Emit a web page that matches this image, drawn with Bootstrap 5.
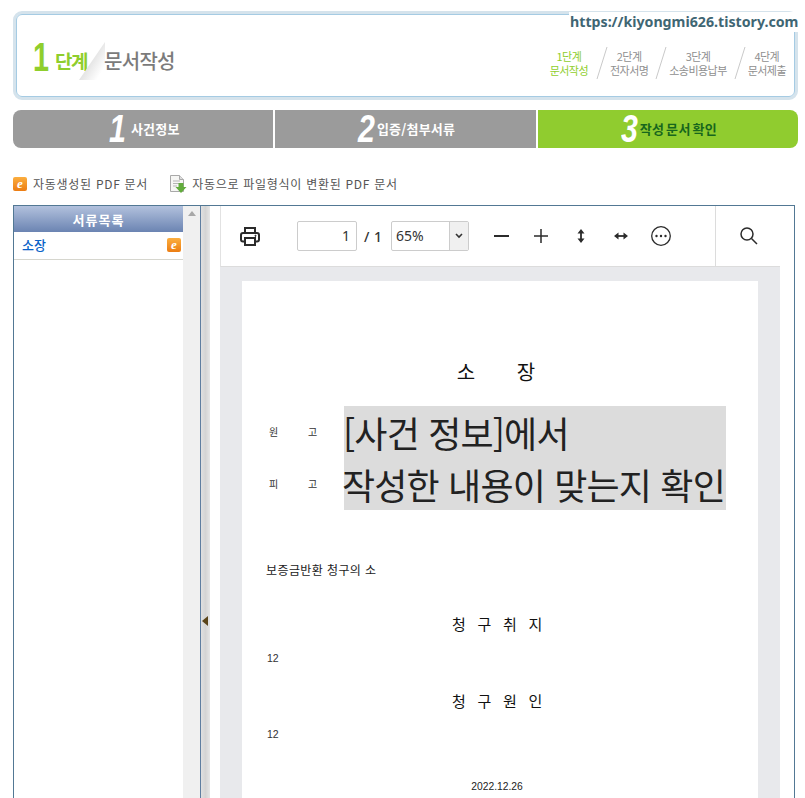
<!DOCTYPE html>
<html lang="ko">
<head>
<meta charset="utf-8">
<title>문서작성</title>
<link href="https://cdn.jsdelivr.net/npm/bootstrap@5.3.0/dist/css/bootstrap.min.css" rel="stylesheet">
<style>
html,body{height:798px;overflow:hidden;background:#fff;}
body{font-family:"Noto Sans CJK KR","Liberation Sans",sans-serif;color:#333;}
.shell{padding:11px 7px 0 13px;}
/* header */
.stage-band{height:89px;border:3px solid #d5e3ec;border-radius:9px;position:relative;}
.stage-box{height:83px;border:1px solid #a5cbe3;border-radius:6px;background:#fff;padding:0 8px 0 16px;}
.url-tag{position:absolute;top:-2px;left:553px;width:232px;height:20px;padding-left:1px;background:#fff;color:#3f6673;font:700 14.2px/20px "Noto Sans",sans-serif;white-space:nowrap;}
.big-one{font:700 40px/1 "Liberation Sans",sans-serif;color:#8fce2d;transform:scaleX(.72);transform-origin:left;width:22px;margin-top:2px;}
.stage-word{font-size:19px;font-weight:700;color:#8fce2d;letter-spacing:-1.5px;line-height:1;width:35px;margin-top:10px;}
.stage-fold{width:30px;height:40px;margin:10px -4px 0 -12px;flex:none;}
.stage-name{font-size:20px;font-weight:500;color:#7b7b7b;letter-spacing:-.7px;line-height:1;margin-top:10px;}
.step-wrap{margin-top:15px;}
.step-item{font-size:11px;line-height:14.5px;text-align:center;color:#8f8f8f;letter-spacing:-.55px;white-space:nowrap;}
.step-on{color:#8fce2d;}
.step-cut{width:12px;height:32px;margin:0 2px 0 7px;flex:none;}
.step-cut-first{margin-left:8px;}
/* tabs */
.tab-row{margin-top:10px;height:38px;gap:2px;}
.tab-cell{flex:1 1 0;background:#9b9b9b;color:#fff;font-size:13px;font-weight:700;height:38px;letter-spacing:.2px;}
.tab-first{border-radius:8px 0 0 8px;}
.tab-last{border-radius:0 8px 8px 0;background:#90cc2f;color:#17661d;word-spacing:-2px;letter-spacing:.3px;}
.tab-num{font:italic 700 38px/38px "Liberation Sans",sans-serif;color:#fff;margin-right:3px;letter-spacing:0;transform:scaleX(.8);display:inline-block;}
.tab-num-tight{margin-right:0;}
/* legend */
.legend-row{margin-top:26px;height:20px;font-size:12px;color:#555;letter-spacing:.72px;gap:21px;}
.orange-e{width:14px;height:14px;border-radius:2px;background:linear-gradient(#fbae3f,#ec7d13);color:#fff;font:italic 700 13px/14px "Liberation Serif",serif;text-align:center;flex:none;display:inline-block;letter-spacing:0;}
.legend-a{gap:6px;}
.legend-b{gap:5px;}
/* frame */
.main-frame{margin-top:11px;margin-right:3px;height:593px;border:1px solid #527894;border-bottom:0;background:#fff;overflow:hidden;}
.side-col{width:169px;flex:none;}
.side-head{height:26px;background:linear-gradient(#b2c1dd,#6b84b2);color:#fff;font-size:13px;font-weight:700;text-align:center;line-height:27px;letter-spacing:1.1px;}
.side-item{height:28px;border-bottom:1px solid #d6d6ce;padding:0 2px 2px 8px;color:#0a62c8;font-size:13px;font-weight:500;}
.side-scroll{width:17px;flex:none;background:#f0f0f0;padding-top:5px;text-align:center;}
.up-tri{display:block;width:0;height:0;margin:0 auto;border:4px solid transparent;border-top:0;border-bottom:5px solid #a8a8a8;}
.split-bar{width:10px;flex:none;border-left:1px solid #5f7ea0;background:linear-gradient(90deg,#e0e0e0,#d4d4d4 50%,#e6e6e6);height:100%;position:relative;}
.left-tri{position:absolute;left:1px;top:410px;width:0;height:0;border:5px solid transparent;border-left:0;border-right:6px solid #5a4418;}
.view-col{width:560px;flex:none;margin-left:10px;}
.view-tools{height:61px;border-left:1px solid #e2e2e2;border-bottom:1px solid #dcdcdc;background:#fff;color:#333;font-family:"Noto Sans",sans-serif;}
.tool-print{margin-left:19px;width:20px;}
.page-input{width:60px;height:30px;margin-left:37px;border:1px solid #ccc;border-radius:2px;text-align:right;padding-right:6px;font-size:14px;line-height:28px;}
.page-total{margin:0 11px 0 7px;font-size:14px;font-weight:500;letter-spacing:.5px;white-space:nowrap;width:16px;}
.zoom-box{width:78px;height:30px;border:1px solid #ccc;border-radius:2px;font-size:14px;line-height:28px;padding-left:4px;}
.zoom-caret{width:19px;height:28px;background:#f0f0f0;border-left:1px solid #ccc;}
.tool-gap{width:40px;flex:none;height:20px;}
.tool-minus{width:39px;margin-left:8px;margin-right:5px;}
.tool-sep{margin-left:34px;width:1px;height:60px;background:#dcdcdc;}
.view-desk{background:#e8e9ec;height:532px;padding:14px 22px 0;}
.doc-page{background:#fff;height:518px;padding:0 32px 0 24px;color:#222;}
.doc-title{padding-top:77px;height:125px;font-size:20px;line-height:28px;text-align:center;word-spacing:36px;color:#111;}
.party-wrap{height:104px;}
.party-col{width:78px;flex:none;font-size:10px;color:#333;padding-left:3px;}
.party-line{height:52px;line-height:52px;}
.party-line span{display:inline-block;width:39px;}
.note-box{width:382px;background:#dcdcdc;font-size:36px;line-height:52px;color:#222;white-space:nowrap;letter-spacing:-.83px;margin-right:-24px;flex:none;}
.note-top{margin-left:-1px;}
.note-low{margin-left:-2px;}
.case-name{margin-top:51px;font-size:12px;line-height:18px;color:#222;letter-spacing:.4px;}
.sec-head{font-size:15px;line-height:22px;text-align:center;letter-spacing:11.7px;color:#111;padding-left:14px;}
.sec-a{margin-top:34px;}
.sec-b{margin-top:25px;}
.doc-num{font:10.5px/14px "Liberation Sans",sans-serif;color:#333;margin-top:16px;padding-left:1px;}
.doc-num-b{margin-top:15px;}
.doc-date{font:10.3px/14px "Liberation Sans",sans-serif;color:#222;text-align:center;margin-top:39px;padding-left:2px;}
</style>
</head>
<body>
<div class="shell">
  <div class="stage-band">
    <div class="stage-box d-flex align-items-center">
      <div class="big-one">1</div>
      <div class="stage-word">단계</div>
      <svg class="stage-fold" viewBox="0 0 30 40"><defs><linearGradient id="fd" x1=".45" y1=".35" x2=".9" y2=".75"><stop offset="0" stop-color="#dedede"/><stop offset="1" stop-color="#fff"/></linearGradient></defs><polygon points="27,1 1,39 27,39" fill="url(#fd)"/></svg>
      <div class="stage-name">문서작성</div>
      <div class="ms-auto d-flex align-items-center step-wrap">
        <div class="step-item step-on"><div>1단계</div><div>문서작성</div></div>
        <svg class="step-cut step-cut-first" viewBox="0 0 12 32"><line x1="11" y1="0" x2="1" y2="32" stroke="#c9c9c9"/></svg>
        <div class="step-item"><div>2단계</div><div>전자서명</div></div>
        <svg class="step-cut" viewBox="0 0 12 32"><line x1="11" y1="0" x2="1" y2="32" stroke="#c9c9c9"/></svg>
        <div class="step-item"><div>3단계</div><div>소송비용납부</div></div>
        <svg class="step-cut" viewBox="0 0 12 32"><line x1="11" y1="0" x2="1" y2="32" stroke="#c9c9c9"/></svg>
        <div class="step-item"><div>4단계</div><div>문서제출</div></div>
      </div>
    </div>
    <div class="url-tag">https://kiyongmi626.tistory.com</div>
  </div>

  <div class="tab-row d-flex">
    <div class="tab-cell tab-first d-flex align-items-center justify-content-center"><span class="tab-num">1</span>사건정보</div>
    <div class="tab-cell d-flex align-items-center justify-content-center"><span class="tab-num tab-num-tight">2</span>입증/첨부서류</div>
    <div class="tab-cell tab-last d-flex align-items-center justify-content-center"><span class="tab-num tab-num-tight">3</span>작성 문서 확인</div>
  </div>

  <div class="legend-row d-flex align-items-center">
    <div class="d-flex align-items-center legend-a"><span class="orange-e">e</span>자동생성된 PDF 문서</div>
    <div class="d-flex align-items-center legend-b">
      <svg width="18" height="18" viewBox="0 0 18 18"><path d="M1.500.5h9l4 4v12h-13z" fill="#f6f6f4" stroke="#a9a9a9"/><path d="M10.500.5v4h4" fill="#ddd" stroke="#a9a9a9"/><path d="M4 6h7M4 8.500h7M4 11h4" stroke="#b5b5b5"/><path d="M9.500 8h5v4h3L12 18l-5.500-6h3z" fill="#62ac3c"/></svg>
      <span>자동으로 파일형식이 변환된 PDF 문서</span>
    </div>
  </div>

  <div class="main-frame d-flex">
    <div class="side-col">
      <div class="side-head">서류목록</div>
      <div class="side-item d-flex align-items-center justify-content-between"><span>소장</span><span class="orange-e">e</span></div>
    </div>
    <div class="side-scroll"><span class="up-tri"></span></div>
    <div class="split-bar"><span class="left-tri"></span></div>
    <div class="view-col">
      <div class="view-tools d-flex align-items-center">
        <svg class="tool-print" width="20" height="20" viewBox="0 0 20 20" fill="none" stroke="#2b2b2b" stroke-width="2"><path d="M5 7V2h10v5"/><rect x="1" y="7" width="18" height="8.500" rx="2"/><rect x="5" y="12" width="10" height="7" fill="#fff"/><circle cx="15.500" cy="9.800" r=".6" fill="#2b2b2b" stroke-width="1"/></svg>
        <div class="page-input">1</div>
        <div class="page-total">/ 1</div>
        <div class="zoom-box d-flex justify-content-between">65%
          <span class="zoom-caret d-flex align-items-center justify-content-center"><svg width="8" height="6" viewBox="0 0 8 6" fill="none" stroke="#333" stroke-width="1.600"><path d="M1 1l3 3 3-3"/></svg></span>
        </div>
        <svg class="tool-gap tool-minus" viewBox="0 0 39 20" stroke="#2b2b2b" stroke-width="2"><path d="M17 10h15"/></svg>
        <svg class="tool-gap" viewBox="0 0 40 20" stroke="#2b2b2b" stroke-width="1.500"><path d="M13 10h14M20 3v14"/></svg>
        <svg class="tool-gap" viewBox="0 0 40 20" stroke="#2b2b2b" stroke-width="1.800" fill="#2b2b2b"><path d="M20 5v10"/><path d="M16.500 7.500L20 3 23.500 7.500zM16.500 12.500L20 17 23.500 12.500z" stroke="none"/></svg>
        <svg class="tool-gap" viewBox="0 0 40 20" stroke="#2b2b2b" stroke-width="1.800" fill="#2b2b2b"><path d="M15 10h10"/><path d="M17.500 6.500L13 10 17.500 13.500zM22.500 6.500L27 10 22.500 13.500z" stroke="none"/></svg>
        <svg class="tool-gap" viewBox="0 0 40 20"><circle cx="20" cy="10" r="9.300" fill="none" stroke="#2b2b2b" stroke-width="1.300"/><circle cx="15.500" cy="10" r="1.200" fill="#2b2b2b"/><circle cx="20" cy="10" r="1.200" fill="#2b2b2b"/><circle cx="24.500" cy="10" r="1.200" fill="#2b2b2b"/></svg>
        <div class="tool-sep"></div>
        <svg class="ms-4" width="18" height="18" viewBox="0 0 18 18" fill="none" stroke="#2b2b2b" stroke-width="1.500"><circle cx="7" cy="7" r="6"/><path d="M11.500 11.500L17 17"/></svg>
      </div>
      <div class="view-desk">
        <div class="doc-page">
          <div class="doc-title">소 장</div>
          <div class="party-wrap d-flex">
            <div class="party-col">
              <div class="party-line"><span>원</span>고</div>
              <div class="party-line"><span>피</span>고</div>
            </div>
            <div class="note-box"><div class="note-top">[사건 정보]에서</div><div class="note-low">작성한 내용이 맞는지 확인</div></div>
          </div>
          <div class="case-name">보증금반환 청구의 소</div>
          <div class="sec-head sec-a">청구취지</div>
          <div class="doc-num">12</div>
          <div class="sec-head sec-b">청구원인</div>
          <div class="doc-num doc-num-b">12</div>
          <div class="doc-date">2022.12.26</div>
        </div>
      </div>
    </div>
  </div>
</div>
<script src="https://cdn.jsdelivr.net/npm/bootstrap@5.3.0/dist/js/bootstrap.bundle.min.js"></script>
</body>
</html>
